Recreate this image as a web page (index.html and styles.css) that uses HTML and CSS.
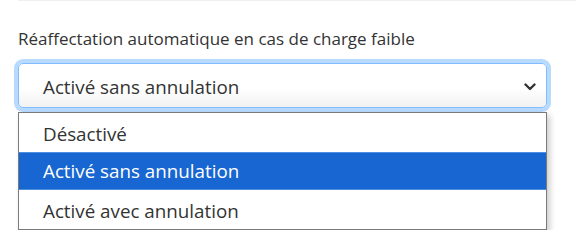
FILE: index.html
```html
<!DOCTYPE html>
<html lang="fr">
<head>
    <meta charset="UTF-8">
    <meta name="viewport" content="width=device-width, initial-scale=1.0">
    <title>Réaffectation automatique</title>
    <link rel="stylesheet" href="styles.css">
</head>
<body>
    <div class="section">
        <label class="field-label">Réaffectation automatique en cas de charge faible</label>
        <div class="select-wrap">
            <div class="select">
                <span class="select-value">Activé sans annulation</span>
                <svg class="chevron" width="12" height="8" viewBox="0 0 12 8">
                    <path d="M1.5 1.5 L6 6 L10.5 1.5" fill="none" stroke="#333" stroke-width="2.4" stroke-linecap="round" stroke-linejoin="round"/>
                </svg>
            </div>
        </div>
        <ul class="options">
            <li class="option">Désactivé</li>
            <li class="option selected">Activé sans annulation</li>
            <li class="option">Activé avec annulation</li>
        </ul>
    </div>
</body>
</html>
```

FILE: styles.css
```css
* {
    margin: 0;
    padding: 0;
    box-sizing: border-box;
}

body {
    font-family: 'Open Sans', 'Noto Sans', sans-serif;
    background: #fff;
    color: #333;
}

.section {
    margin-left: 18px;
    border-top: 1px solid #f0f0f0;
    padding-top: 26px;
}

.field-label {
    display: block;
    font-size: 17px;
    line-height: 24px;
    color: #333;
    margin-bottom: 12px;
}

.select-wrap {
    width: 529px;
}

.select {
    display: flex;
    align-items: center;
    justify-content: space-between;
    height: 45px;
    padding: 2px 10px 0 24px;
    border: 1px solid #80bdff;
    border-radius: 5px;
    background: linear-gradient(#fff 55%, #f2f2f2);
    box-shadow: 0 0 0 4px rgba(0, 123, 255, 0.28);
    font-size: 18.8px;
    color: #333;
}

.chevron {
    display: block;
}

.options {
    list-style: none;
    width: 529px;
    margin-top: 4px;
    border: 1px solid #7a7a7a;
    background: #fff;
    box-shadow: 3px 3px 6px rgba(0, 0, 0, 0.2);
}

.option {
    height: 39px;
    line-height: 38px;
    padding-top: 2px;
    padding-left: 24px;
    font-size: 18.8px;
    color: #333;
}

.option.selected {
    height: 38px;
    padding-top: 1px;
    background: #1766d1;
    color: #fff;
    border-top: 1px solid #4c8ee0;
    border-bottom: 1px solid #4c8ee0;
    line-height: 34px;
}
```
